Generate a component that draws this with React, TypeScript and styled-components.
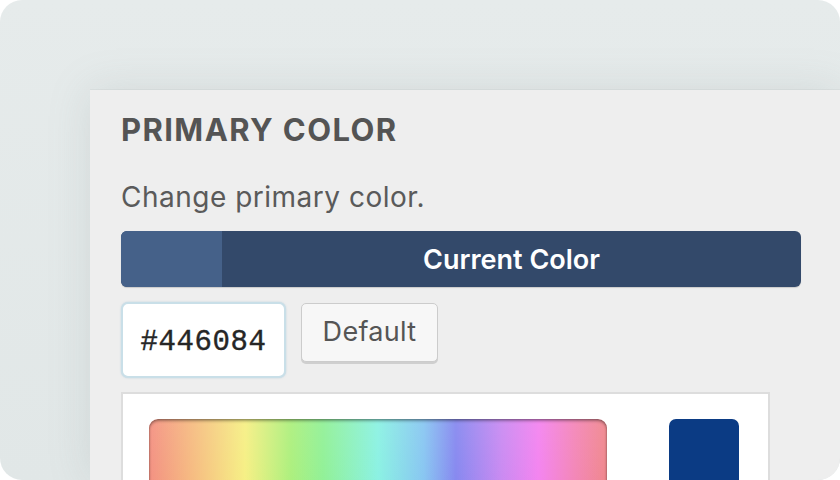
import React from "react";
import styled, { createGlobalStyle } from "styled-components";

const Global = createGlobalStyle`
  html, body { margin: 0; padding: 0; background: #ffffff; }
  * { box-sizing: border-box; }
`;

const Frame = styled.div`
  width: 840px;
  height: 480px;
  border-radius: 22px;
  overflow: hidden;
  background: linear-gradient(180deg, #e6ebeb 0%, #e1e7e7 100%);
  padding: 90px 0 0 90px;
`;

const Panel = styled.section`
  height: 100%;
  background: #eeeeee;
  box-shadow: 0 0 40px rgba(120, 140, 140, 0.18), 0 -1px 0 rgba(0, 0, 0, 0.03);
  padding: 20px 0 0 31px;
  font-family: Inter, "Liberation Sans", sans-serif;
  color: #555555;
`;

const Title = styled.h2`
  margin: 0;
  font-size: 31px;
  line-height: 40px;
  font-weight: 700;
  letter-spacing: 1.4px;
  color: #545454;
`;

const Description = styled.p`
  margin: 31px 0 0;
  font-size: 28px;
  line-height: 32px;
  font-weight: 400;
  letter-spacing: 0.5px;
  color: #5a5a5a;
`;

const ColorBar = styled.div`
  margin-top: 18px;
  width: 680px;
  height: 56px;
  display: flex;
  border-radius: 6px;
  overflow: hidden;
  background: #33496a;
  box-shadow: 0 1px 1px rgba(0, 0, 0, 0.15);
`;

const BarSwatch = styled.div<{ $color: string }>`
  width: 101px;
  background: ${(p) => p.$color};
`;

const BarLabel = styled.div`
  flex: 1;
  display: flex;
  align-items: center;
  justify-content: center;
  color: #ffffff;
  font-size: 27px;
  font-weight: 600;
`;

const Controls = styled.div`
  margin-top: 15px;
  display: flex;
  align-items: flex-start;
  gap: 15px;
`;

const HexInput = styled.div`
  width: 165px;
  height: 76px;
  background: #ffffff;
  border: 2px solid #c9dfe8;
  border-radius: 7px;
  box-shadow: 0 0 2px rgba(120, 170, 200, 0.4);
  display: flex;
  align-items: center;
  justify-content: center;
  font-family: "Liberation Mono", "Courier New", monospace;
  font-weight: 400;
  font-size: 29px;
  letter-spacing: 0.6px;
  color: #262626;
  -webkit-text-stroke: 0.4px #262626;
  padding-top: 4px;
`;

const DefaultButton = styled.button`
  width: 137px;
  height: 59px;
  margin-top: 1px;
  background: #f7f7f7;
  border: 1px solid #cccccc;
  border-radius: 5px;
  box-shadow: 0 2px 0 #cfcfcf;
  font-family: Inter, "Liberation Sans", sans-serif;
  font-size: 27px;
  letter-spacing: 0.3px;
  color: #555555;
  padding: 0 0 3px;
`;

const Picker = styled.div`
  margin-top: 14px;
  width: 649px;
  height: 200px;
  background: #ffffff;
  border: 2px solid #dddddd;
  border-bottom: none;
  padding: 25px 28px 0 26px;
  display: flex;
  gap: 62px;
`;

const Spectrum = styled.div`
  width: 458px;
  height: 120px;
  border-radius: 9px;
  background:
    linear-gradient(180deg, rgba(255, 255, 255, 0.15) 0%, rgba(255, 255, 255, 0.05) 100%),
    linear-gradient(
      90deg,
      #f28575 0%,
      #f5b274 9%,
      #f5ee78 21%,
      #a4ee70 31%,
      #86ef8c 38%,
      #7ff0e0 50%,
      #7cc0f0 60%,
      #7a7cee 67%,
      #c47ef0 77%,
      #f277ee 85%,
      #f27ab0 93%,
      #ee7b80 100%
    );
  box-shadow: inset 0 2px 3px rgba(0, 0, 0, 0.35), inset 0 0 2px rgba(0, 0, 0, 0.3);
`;

const CurrentSwatch = styled.div<{ $color: string }>`
  width: 70px;
  height: 120px;
  border-radius: 7px;
  background: ${(p) => p.$color};
`;

export default function App() {
  return (
    <>
      <Global />
      <Frame>
        <Panel>
          <Title>PRIMARY COLOR</Title>
          <Description>Change primary color.</Description>
          <ColorBar>
            <BarSwatch $color="#456189" />
            <BarLabel>Current Color</BarLabel>
          </ColorBar>
          <Controls>
            <HexInput>#446084</HexInput>
            <DefaultButton>Default</DefaultButton>
          </Controls>
          <Picker>
            <Spectrum />
            <CurrentSwatch $color="#0b3b84" />
          </Picker>
        </Panel>
      </Frame>
    </>
  );
}
